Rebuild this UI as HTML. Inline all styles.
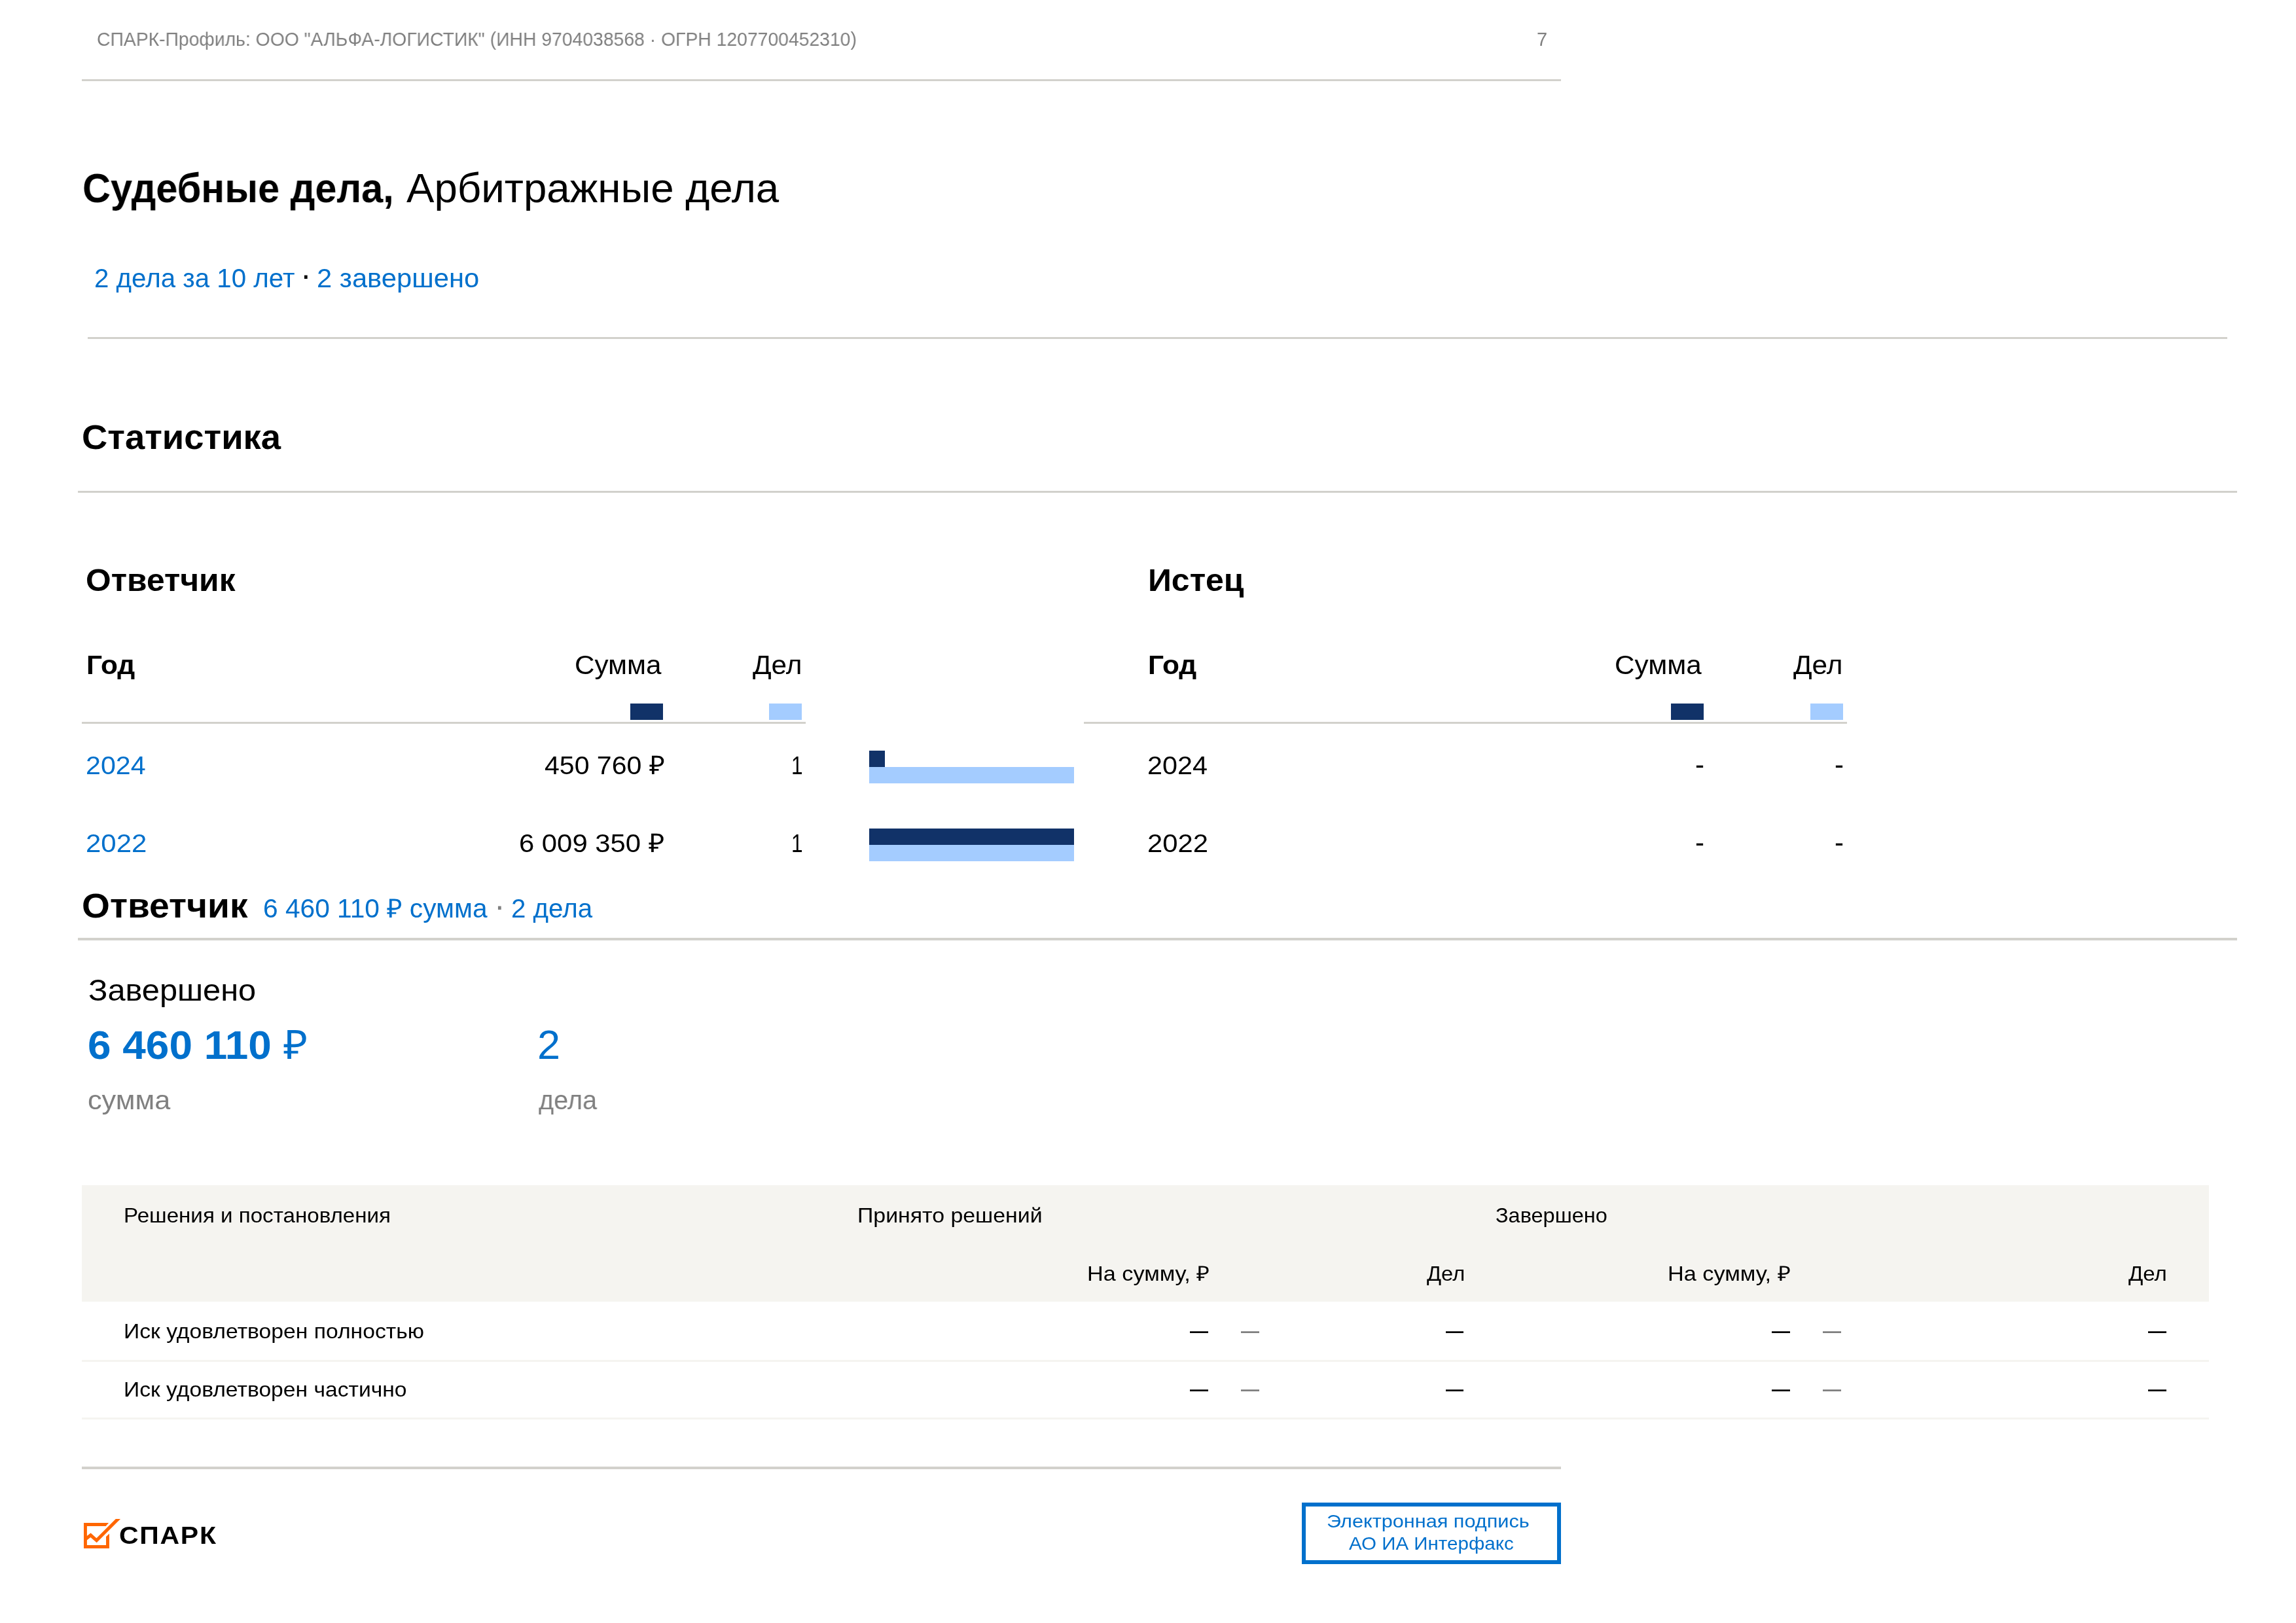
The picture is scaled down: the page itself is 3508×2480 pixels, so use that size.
<!DOCTYPE html>
<html lang="ru">
<head>
<meta charset="utf-8">
<title>СПАРК-Профиль: ООО "АЛЬФА-ЛОГИСТИК" — Судебные дела</title>
<style>
html,body{margin:0;padding:0;background:#fff}
body{width:3508px;height:2480px;position:relative;overflow:hidden;font-family:"Liberation Sans", sans-serif;color:#000}
header,main,section,footer,h1,p{margin:0;padding:0;font-size:0;line-height:0}
.t{position:absolute;margin:0;padding:0;white-space:nowrap;line-height:1;font-weight:400;transform-origin:0 0;will-change:transform}
.t b{font-weight:700}
.r{position:absolute}
</style>
</head>
<body>
<div class="shapes">
<div class="r" style="left:125px;top:121px;width:2260px;height:3px;background:#d2d1cc"></div>
<div class="r" style="left:134px;top:515px;width:3269px;height:3px;background:#d2d1cc"></div>
<div class="r" style="left:119px;top:750px;width:3299px;height:3px;background:#d2d1cc"></div>
<div class="r" style="left:125px;top:1103px;width:1105.5px;height:3px;background:#d2d1cc"></div>
<div class="r" style="left:1656px;top:1103px;width:1166px;height:3px;background:#d2d1cc"></div>
<div class="r" style="left:119px;top:1433px;width:3299px;height:4px;background:#d2d1cc"></div>
<div class="r" style="left:125px;top:2241px;width:2260px;height:4px;background:#d2d1cc"></div>
<div class="r" style="left:963px;top:1075px;width:50px;height:25px;background:#113268"></div>
<div class="r" style="left:1175px;top:1075px;width:50px;height:25px;background:#a4ccff"></div>
<div class="r" style="left:2553px;top:1075px;width:50px;height:25px;background:#113268"></div>
<div class="r" style="left:2766px;top:1075px;width:50px;height:25px;background:#a4ccff"></div>
<div class="r" style="left:1328px;top:1147px;width:24px;height:25px;background:#113268"></div>
<div class="r" style="left:1328px;top:1172px;width:313px;height:25px;background:#a4ccff"></div>
<div class="r" style="left:1328px;top:1266px;width:313px;height:25px;background:#113268"></div>
<div class="r" style="left:1328px;top:1291px;width:313px;height:25px;background:#a4ccff"></div>
<div class="r" style="left:125px;top:1811px;width:3250px;height:178px;background:#f5f4f0"></div>
<div class="r" style="left:125px;top:2078px;width:3250px;height:3px;background:#f5f4f0"></div>
<div class="r" style="left:125px;top:2166px;width:3250px;height:3px;background:#f5f4f0"></div>
</div>
<header>
<div class="t" id="hdr" style="left:147.80px;top:46.00px;font-size:29px;color:#808080;transform:scaleX(0.9771)">СПАРК-Профиль: ООО "АЛЬФА-ЛОГИСТИК" (ИНН 9704038568 · ОГРН 1207700452310)</div>
<div class="t" id="pg" style="left:2347.50px;top:46.00px;font-size:29px;color:#808080">7</div>
</header>
<h1>
<strong class="t" id="ttlb" style="left:126.20px;top:256.00px;font-size:63px;font-weight:700;transform:scaleX(0.9438)">Судебные дела,</strong>
<span class="t" id="ttlr" style="left:621.20px;top:256.00px;font-size:63px;transform:scaleX(1.0100)">Арбитражные дела</span>
</h1>
<p>
<span class="t" id="sub1" style="left:144.00px;top:405.00px;font-size:40px;color:#0170cc;transform:scaleX(1.0070)">2 дела за 10 лет</span>
<span class="t" id="subd" style="left:459.00px;top:395.00px;font-size:50px">·</span>
<span class="t" id="sub2" style="left:484.20px;top:405.00px;font-size:40px;color:#0170cc;transform:scaleX(1.0430)">2 завершено</span>
</p>
<section>
<h2 class="t" id="stat" style="left:125.00px;top:643.00px;font-size:51px;font-weight:700;transform:scaleX(1.0666)">Статистика</h2>
<h3 class="t" id="otv" style="left:131.00px;top:863.00px;font-size:47.5px;font-weight:700;transform:scaleX(1.0463)">Ответчик</h3>
<div class="t" id="lgod" style="left:131.80px;top:996.00px;font-size:40px;font-weight:700;transform:scaleX(1.0619)">Год</div>
<div class="t" id="lsum" style="left:877.80px;top:996.00px;font-size:40px;transform:scaleX(1.0549)">Сумма</div>
<div class="t" id="ldel" style="left:1150.00px;top:996.00px;font-size:40px;transform:scaleX(1.0566)">Дел</div>
<div class="t" id="l2024" style="left:131.20px;top:1150.00px;font-size:39.5px;color:#0170cc;transform:scaleX(1.0424)">2024</div>
<div class="t" id="ls1" style="left:831.80px;top:1150.00px;font-size:39.5px;transform:scaleX(1.0387)">450 760 ₽</div>
<div class="t" id="ld1" style="left:1208.60px;top:1150.00px;font-size:39.5px;transform:scaleX(0.8000)">1</div>
<div class="t" id="l2022" style="left:131.20px;top:1269.00px;font-size:39.5px;color:#0170cc;transform:scaleX(1.0619)">2022</div>
<div class="t" id="ls2" style="left:793.40px;top:1269.00px;font-size:39.5px;transform:scaleX(1.0585)">6 009 350 ₽</div>
<div class="t" id="ld2" style="left:1208.60px;top:1269.00px;font-size:39.5px;transform:scaleX(0.8000)">1</div>
<h3 class="t" id="ist" style="left:1753.80px;top:863.00px;font-size:47.5px;font-weight:700;transform:scaleX(1.0508)">Истец</h3>
<div class="t" id="rgod" style="left:1753.60px;top:996.00px;font-size:40px;font-weight:700;transform:scaleX(1.0619)">Год</div>
<div class="t" id="rsum" style="left:2467.00px;top:996.00px;font-size:40px;transform:scaleX(1.0557)">Сумма</div>
<div class="t" id="rdel" style="left:2740.00px;top:996.00px;font-size:40px;transform:scaleX(1.0566)">Дел</div>
<div class="t" id="r2024" style="left:1752.80px;top:1150.00px;font-size:39.5px;transform:scaleX(1.0459)">2024</div>
<div class="t" id="hy1a" style="left:2590.00px;top:1148.00px;font-size:42px">-</div>
<div class="t" id="hy1b" style="left:2803.00px;top:1148.00px;font-size:42px">-</div>
<div class="t" id="r2022" style="left:1752.80px;top:1269.00px;font-size:39.5px;transform:scaleX(1.0584)">2022</div>
<div class="t" id="hy2a" style="left:2590.00px;top:1267.00px;font-size:42px">-</div>
<div class="t" id="hy2b" style="left:2803.00px;top:1267.00px;font-size:42px">-</div>
</section>
<section>
<h2 class="t" id="otv2" style="left:125.00px;top:1359.00px;font-size:51px;font-weight:700;transform:scaleX(1.0815)">Ответчик</h2>
<div class="t" id="sm1" style="left:402.00px;top:1368.00px;font-size:40px;color:#0170cc;transform:scaleX(1.0164)">6 460 110 ₽ сумма</div>
<div class="t" id="smd" style="left:755.00px;top:1359.00px;font-size:50px;color:#808080">·</div>
<div class="t" id="sm2" style="left:780.60px;top:1368.00px;font-size:40px;color:#0170cc;transform:scaleX(1.0074)">2 дела</div>
<h3 class="t" id="zav" style="left:135.00px;top:1490.00px;font-size:46px;font-weight:400;transform:scaleX(1.0586)">Завершено</h3>
<div class="t" id="big" style="left:134.00px;top:1566.00px;font-size:61.5px;color:#0170cc;transform:scaleX(1.0392)"><b>6 460 110</b> ₽</div>
<div class="t" id="big2" style="left:821.30px;top:1565.00px;font-size:63px;color:#0170cc">2</div>
<div class="t" id="summa" style="left:134.00px;top:1660.00px;font-size:41.5px;color:#808080;transform:scaleX(1.0417)">сумма</div>
<div class="t" id="dela" style="left:822.80px;top:1660.00px;font-size:41.5px;color:#808080;transform:scaleX(0.9543)">дела</div>
<div class="t" id="th1" style="left:189.00px;top:1842.00px;font-size:31.7px;transform:scaleX(1.0456)">Решения и постановления</div>
<div class="t" id="th2" style="left:1309.60px;top:1842.00px;font-size:31.7px;transform:scaleX(1.0682)">Принято решений</div>
<div class="t" id="th3" style="left:2285.00px;top:1842.00px;font-size:31.7px;transform:scaleX(1.0242)">Завершено</div>
<div class="t" id="th4" style="left:1660.80px;top:1931.00px;font-size:31.7px;transform:scaleX(1.0807)">На сумму, ₽</div>
<div class="t" id="th5" style="left:2180.40px;top:1931.00px;font-size:31.7px;transform:scaleX(1.0291)">Дел</div>
<div class="t" id="th6" style="left:2548.00px;top:1931.00px;font-size:31.7px;transform:scaleX(1.0819)">На сумму, ₽</div>
<div class="t" id="th7" style="left:3252.40px;top:1931.00px;font-size:31.7px;transform:scaleX(1.0401)">Дел</div>
<div class="t" id="tr1" style="left:189.00px;top:2019.00px;font-size:31.7px;transform:scaleX(1.0629)">Иск удовлетворен полностью</div>
<div class="t" id="d0a" style="left:1818.20px;top:2011.00px;font-size:42px;transform:scaleX(0.6595)">—</div>
<div class="t" id="d0b" style="left:1895.60px;top:2011.00px;font-size:42px;color:#808080;transform:scaleX(0.6646)">—</div>
<div class="t" id="d0c" style="left:2209.00px;top:2011.00px;font-size:42px;transform:scaleX(0.6525)">—</div>
<div class="t" id="d0d" style="left:2707.00px;top:2011.00px;font-size:42px;transform:scaleX(0.6667)">—</div>
<div class="t" id="d0e" style="left:2784.80px;top:2011.00px;font-size:42px;color:#808080;transform:scaleX(0.6738)">—</div>
<div class="t" id="d0f" style="left:3282.00px;top:2011.00px;font-size:42px;transform:scaleX(0.6667)">—</div>
<div class="t" id="tr2" style="left:189.00px;top:2108.00px;font-size:31.7px;transform:scaleX(1.0619)">Иск удовлетворен частично</div>
<div class="t" id="d1a" style="left:1818.20px;top:2100.00px;font-size:42px;transform:scaleX(0.6595)">—</div>
<div class="t" id="d1b" style="left:1895.60px;top:2100.00px;font-size:42px;color:#808080;transform:scaleX(0.6646)">—</div>
<div class="t" id="d1c" style="left:2209.00px;top:2100.00px;font-size:42px;transform:scaleX(0.6525)">—</div>
<div class="t" id="d1d" style="left:2707.00px;top:2100.00px;font-size:42px;transform:scaleX(0.6667)">—</div>
<div class="t" id="d1e" style="left:2784.80px;top:2100.00px;font-size:42px;color:#808080;transform:scaleX(0.6738)">—</div>
<div class="t" id="d1f" style="left:3282.00px;top:2100.00px;font-size:42px;transform:scaleX(0.6667)">—</div>
</section>
<footer>
<div class="t" id="logo" style="left:182.00px;top:2329.00px;font-size:36px;font-weight:700;letter-spacing:1.5px;transform:scaleX(1.1395)">СПАРК</div>
<div class="t" id="sg1" style="left:2027.00px;top:2311.00px;font-size:28px;color:#0170cc;transform:scaleX(1.0947)">Электронная подпись</div>
<div class="t" id="sg2" style="left:2061.00px;top:2345.00px;font-size:28px;color:#0170cc;transform:scaleX(1.0546)">АО ИА Интерфакс</div>
<div class="r" style="left:1989px;top:2296px;width:396px;height:94px;box-sizing:border-box;border:6px solid #0170cc"></div>
<svg class="r" style="left:120px;top:2310px" width="80" height="70" viewBox="120 2310 80 70">
<defs><clipPath id="ck"><rect x="120" y="2321" width="80" height="60"/></clipPath></defs>
<polygon fill="#ff6600" points="128,2327 166.1,2327 161.7,2331.9 132.9,2331.9 132.9,2361 162.05,2361 162.05,2347.9 166.95,2343.6 166.95,2365.9 128,2365.9"/>
<polyline clip-path="url(#ck)" fill="none" stroke="#ff6600" stroke-width="5.1" stroke-linejoin="miter" stroke-miterlimit="10" points="130.5,2352 138.5,2345.8 147.6,2353.8 184,2317.4"/>
</svg>
</footer>
</body>
</html>
